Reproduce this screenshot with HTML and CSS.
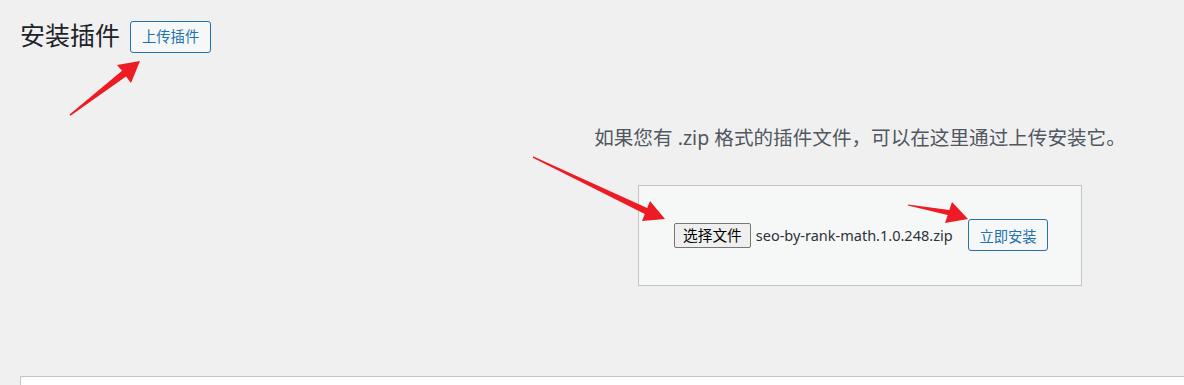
FILE: index.html
```html
<!DOCTYPE html>
<html lang="zh-CN">
<head>
    <meta charset="UTF-8">
    <meta name="viewport" content="width=device-width, initial-scale=1.0">
    <title>安装插件</title>
    <link rel="stylesheet" href="styles.css">
</head>
<body>
    <div class="wrap">
        <div class="page-header">
            <h1 class="page-title">安装插件</h1>
            <button class="page-title-action">上传插件</button>
        </div>

        <div class="upload-plugin">
            <p class="install-help">如果您有 .zip 格式的插件文件，可以在这里通过上传安装它。</p>
            <form class="upload-form">
                <div class="file-input">
                    <span class="file-button">选择文件</span>
                    <span class="file-name">seo-by-rank-math.1.0.248.zip</span>
                </div>
                <button type="button" class="install-button">立即安装</button>
            </form>
        </div>

        <div class="plugin-list"></div>
    </div>

    <!-- annotation arrows drawn over the page -->
    <svg class="arrows" width="1184" height="385" viewBox="0 0 1184 385">
        <polygon points="69.5,114.5 122,70.8 117,65 140,61 131,83 126,76.5 70.5,115.8" />
        <polygon points="533,156.3 647.2,208 650,201 665,219 642,221 644.8,214 532.8,157.8" />
        <polygon points="908,204.4 949.3,210 952,202 968,219 945,223 947.7,215 907.8,205.6" />
    </svg>
</body>
</html>
```

FILE: styles.css
```css
body {
    margin: 0;
    height: 385px;
    overflow: hidden;
    background-color: #f0f0f1;
    font-family: "Noto Sans", "Noto Sans CJK SC", sans-serif;
    color: #3c434a;
}

.wrap {
    padding-left: 20px;
    padding-top: 21px;
}

.page-header {
    display: flex;
    align-items: center;
    height: 32px;
}

.page-title {
    margin: 0 10px 4px 0;
    font-size: 25px;
    font-weight: 400;
    line-height: 32px;
    color: #1d2327;
}

.page-title-action {
    height: 32px;
    padding: 0 11px;
    font-family: inherit;
    font-size: 14.3px;
    line-height: 30px;
    color: #2271b1;
    background: #f6f7f7;
    border: 1px solid #2271b1;
    border-radius: 3px;
    cursor: pointer;
}

/* the real column is wider than the window; this keeps its centre at 860px */
.upload-plugin {
    margin-left: 516px;
    text-align: center;
}

.install-help {
    margin: 71px 0 33px;
    font-size: 19.6px;
    line-height: 28px;
    color: #50575e;
}

.upload-form {
    display: inline-flex;
    align-items: center;
    box-sizing: border-box;
    width: 444px;
    padding: 33px 33px 34px 35px;
    background: #f6f7f7;
    border: 1px solid #c3c4c7;
}

.file-input {
    display: flex;
    align-items: center;
    gap: 5px;
}

.file-button {
    box-sizing: border-box;
    height: 25px;
    padding: 0 8px;
    font-size: 14.7px;
    line-height: 23px;
    color: #000;
    background: #efefef;
    border: 1px solid #767676;
    border-radius: 2px;
}

.file-name {
    font-size: 14.5px;
    color: #2c3338;
}

.install-button {
    margin-left: auto;
    width: 80px;
    height: 32px;
    padding: 0;
    font-family: inherit;
    font-size: 14.3px;
    color: #2271b1;
    background: #f6f7f7;
    border: 1px solid #2271b1;
    border-radius: 3px;
    cursor: pointer;
}

.plugin-list {
    margin-top: 90px;
    height: 8px;
    background: #fff;
    border: 1px solid #c3c4c7;
    border-right: none;
    border-bottom: none;
}

.arrows {
    position: absolute;
    top: 0;
    left: 0;
    pointer-events: none;
}

.arrows polygon {
    fill: #ed1c24;
}
```
